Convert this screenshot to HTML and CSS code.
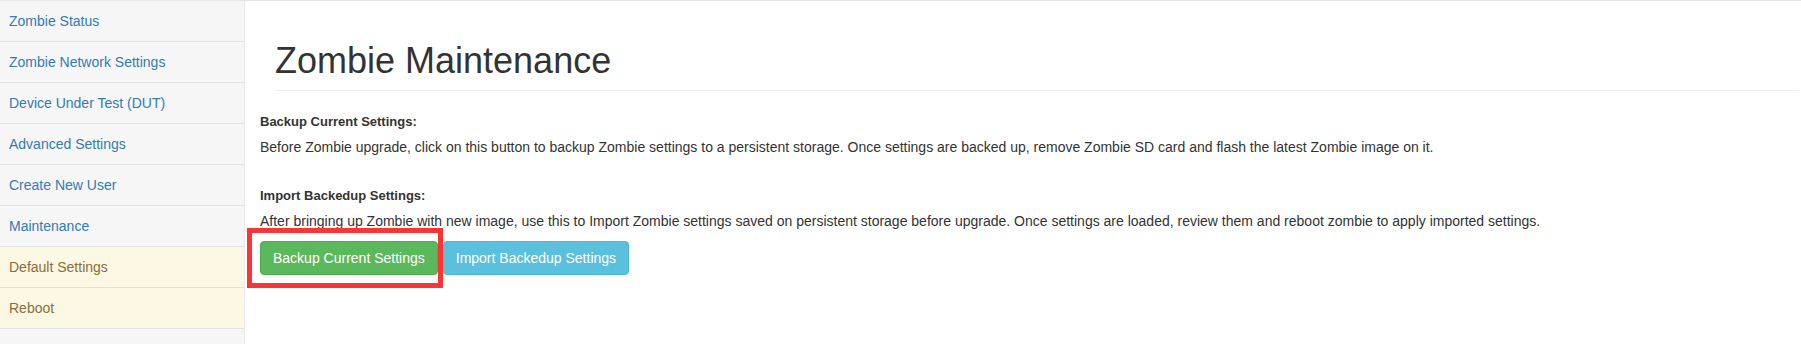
FILE: index.html
```html
<!DOCTYPE html>
<html lang="en">
<head>
<meta charset="utf-8">
<title>Zombie Maintenance</title>
<link rel="stylesheet" href="styles.css">
</head>
<body>
<div class="page">
  <nav class="sidebar">
    <ul class="nav-list">
      <li class="nav-item"><a href="#">Zombie Status</a></li>
      <li class="nav-item"><a href="#">Zombie Network Settings</a></li>
      <li class="nav-item"><a href="#">Device Under Test (DUT)</a></li>
      <li class="nav-item"><a href="#">Advanced Settings</a></li>
      <li class="nav-item"><a href="#">Create New User</a></li>
      <li class="nav-item"><a href="#">Maintenance</a></li>
      <li class="nav-item nav-item-warning"><a href="#">Default Settings</a></li>
      <li class="nav-item nav-item-warning"><a href="#">Reboot</a></li>
    </ul>
  </nav>
  <main class="main">
    <h1 class="page-header">Zombie Maintenance</h1>
    <section class="section section-first">
      <label class="section-label">Backup Current Settings:</label>
      <p class="section-text">Before Zombie upgrade, click on this button to backup Zombie settings to a persistent storage. Once settings are backed up, remove Zombie SD card and flash the latest Zombie image on it.</p>
    </section>
    <section class="section">
      <label class="section-label">Import Backedup Settings:</label>
      <p class="section-text">After bringing up Zombie with new image, use this to Import Zombie settings saved on persistent storage before upgrade. Once settings are loaded, review them and reboot zombie to apply imported settings.</p>
    </section>
    <div class="actions">
      <button class="btn btn-success" type="button">Backup Current Settings</button>
      <button class="btn btn-info" type="button">Import Backedup Settings</button>
      <div class="highlight-box"></div>
    </div>
  </main>
</div>
</body>
</html>
```
FILE: styles.css
```css
html, body {
  margin: 0;
  padding: 0;
  background: #ffffff;
}

body {
  font-family: "Liberation Sans", Arial, Helvetica, sans-serif;
  font-size: 14px;
  line-height: 20px;
  color: #333333;
}

.page {
  display: flex;
  border-top: 1px solid #e6e6e6;
  min-height: 343px;
}

.sidebar {
  width: 244px;
  flex: 0 0 244px;
  background: #f6f6f6;
  border-right: 1px solid #ebebeb;
}

.nav-list {
  list-style: none;
  margin: 0;
  padding: 0;
}

.nav-item {
  border-bottom: 1px solid #e2e2e2;
}

.nav-item a {
  display: block;
  padding: 10px 9px;
  line-height: 20px;
  color: #337ab7;
  text-decoration: none;
}

.nav-item-warning {
  background: #fcf8e3;
}

.nav-item-warning a {
  color: #8a6d3b;
}

.main {
  flex: 1;
  padding: 0 2px 0 15px;
  min-width: 0;
}

.page-header {
  margin: 40px 0 21px 15px;
  padding-bottom: 9px;
  border-bottom: 1px solid #eeeeee;
  font-size: 36px;
  font-weight: 500;
  line-height: 1.1;
  color: #333333;
}

.section-label {
  display: block;
  margin-bottom: 5px;
  font-size: 13px;
  font-weight: bold;
  line-height: 20px;
}

.section-text {
  margin: 0;
}

.section-first {
  margin-bottom: 29px;
}

.actions {
  position: relative;
  display: flex;
  gap: 5px;
  margin-top: 10px;
}

.btn {
  display: inline-block;
  padding: 6px 12px;
  font-family: inherit;
  font-size: 14px;
  line-height: 20px;
  border: 1px solid transparent;
  border-radius: 4px;
  color: #ffffff;
  cursor: pointer;
}

.btn-success {
  background: #5cb85c;
  border-color: #4cae4c;
}

.btn-info {
  background: #5bc0de;
  border-color: #46b8da;
}

.highlight-box {
  position: absolute;
  left: -13px;
  top: -13px;
  width: 186px;
  height: 50px;
  border: 5px solid #fd3434;
  pointer-events: none;
}
```
